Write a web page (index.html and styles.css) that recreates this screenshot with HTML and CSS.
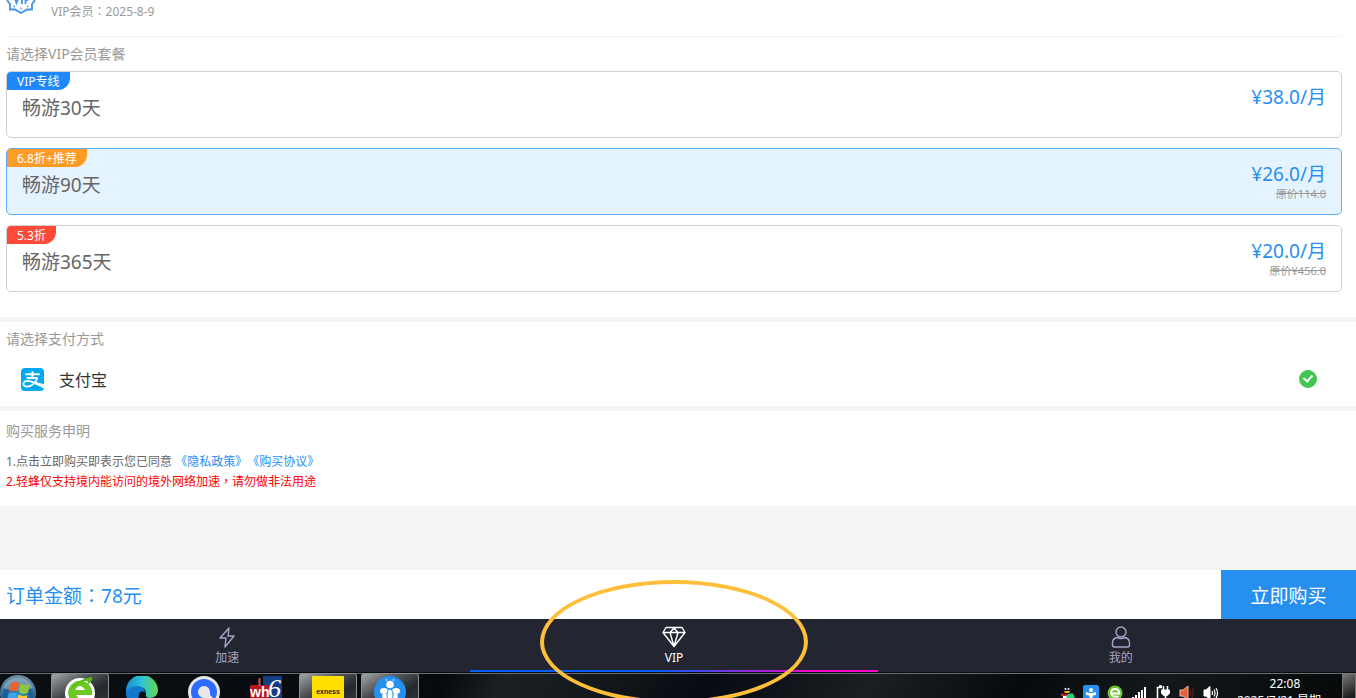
FILE: index.html
```html
<!DOCTYPE html>
<html lang="zh-CN">
<head>
    <meta charset="UTF-8">
    <meta name="viewport" content="width=device-width, initial-scale=1.0">
    <title>VIP</title>
    <link rel="stylesheet" href="styles.css">
</head>
<body>

<main class="page">
    <section class="panel plans-panel">
        <!-- Account -->
        <div class="account">
            <svg class="account-badge" width="30" height="15" viewBox="0 0 30 15" fill="none" stroke="#3d94ea" stroke-width="1.800">
                <path d="M3 -4L1.500 1L4 4L4 9.500L9 9.500L15 13L21 9.500L26 9.500L26 4L28.500 1L27 -4"/>
                <path d="M8 -4L10.500 3L13.500 -5M16 -4V4M19.500 4V0H21Q24 -1 22.500 -5" stroke-width="1.800"/>
                <path d="M7.500 6.500H9M14.500 8.500H16M21 6.500H22.500" stroke-width="1.300"/>
            </svg>
            <span>VIP会员<span class="mark" lang="zh-Hant">：</span>2025-8-9</span>
        </div>

        <!-- Plans -->
        <h2 class="panel-title">请选择VIP会员套餐</h2>
        <div class="plan-list">
            <label class="plan">
                <input type="radio" name="plan" value="30">
                <span class="plan-info">
                    <span class="plan-tag tag-blue">VIP专线</span>
                    <span class="plan-name">畅游30天</span>
                </span>
                <span class="plan-cost">
                    <span class="plan-price">¥38.0/月</span>
                </span>
            </label>
            <label class="plan">
                <input type="radio" name="plan" value="90" checked>
                <span class="plan-info">
                    <span class="plan-tag tag-orange">6.8折+推荐</span>
                    <span class="plan-name">畅游90天</span>
                </span>
                <span class="plan-cost">
                    <span class="plan-price">¥26.0/月</span>
                    <del class="plan-old">原价114.0</del>
                </span>
            </label>
            <label class="plan">
                <input type="radio" name="plan" value="365">
                <span class="plan-info">
                    <span class="plan-tag tag-red">5.3折</span>
                    <span class="plan-name">畅游365天</span>
                </span>
                <span class="plan-cost">
                    <span class="plan-price">¥20.0/月</span>
                    <del class="plan-old">原价¥456.0</del>
                </span>
            </label>
        </div>
    </section>

    <!-- Payment -->
    <section class="panel pay-panel">
        <h2 class="panel-title">请选择支付方式</h2>
        <label class="pay-option">
            <svg width="23" height="23" viewBox="0 0 24 24" fill="none" stroke="#fff">
                <rect width="24" height="24" rx="4" fill="#02a9f1" stroke="none"/>
                <path d="M4.500 6.500H19.500M12 3.500V10.500M6 10.500H17.500" stroke-width="2"/>
                <path d="M17 10.500C15.500 15 11.500 19.500 6.500 19.500C3.500 19.500 2 17.800 2.600 15.800C3.500 13 8 13 11 14.200L24 19" stroke-width="1.800"/>
                <path d="M13.500 14L24 17V21.500L12.500 16Z" fill="#fff" stroke="none"/>
            </svg>
            <span class="pay-name">支付宝</span>
            <input type="radio" name="pay" class="pay-check" checked>
        </label>
    </section>

    <!-- Terms -->
    <section class="panel terms-panel">
        <h2 class="panel-title">购买服务申明</h2>
        <p class="terms">1.点击立即购买即表示您已同意 <a href="#">《隐私政策》</a><a href="#">《购买协议》</a></p>
        <p class="terms warning">2.轻蜂仅支持境内能访问的境外网络加速<span class="mark" lang="zh-Hant">，</span>请勿做非法用途</p>
    </section>
</main>

<div class="order-bar">
    <span class="order-total">订单金额<span class="mark" lang="zh-Hant">：</span>78元</span>
    <button type="button" class="buy-now">立即购买</button>
</div>

<nav class="tabs">
    <a href="#" class="tab">
        <svg width="24" height="24" viewBox="0 0 24 24" fill="none" stroke="currentColor" stroke-width="1.400" stroke-linejoin="round">
            <path d="M14 3L5 13H11L10 22L19 11H13Z"/>
        </svg>
        <span>加速</span>
    </a>
    <a href="#" class="tab active">
        <svg width="24" height="24" viewBox="0 0 24 24" fill="none" stroke="currentColor" stroke-width="1.400" stroke-linejoin="round">
            <path d="M4 2.500H20L23 7.500L12 21.500L1 7.500ZM1 7.500H23M8 7.500L12 3L16 7.500L12 21.500Z"/>
        </svg>
        <span>VIP</span>
        <span class="circle-mark"></span>
    </a>
    <a href="#" class="tab">
        <svg width="24" height="24" viewBox="0 0 24 24" fill="none" stroke="currentColor" stroke-width="1.400">
            <circle cx="12" cy="7" r="5"/>
            <path d="M8 12.500Q3.500 13.500 3.500 18V20Q3.500 22 5.500 22H18.500Q20.500 22 20.500 20V18Q20.500 13.500 16 12.500Q12 14.500 8 12.500Z"/>
        </svg>
        <span>我的</span>
    </a>
</nav>

<!-- Desktop taskbar -->
<footer class="taskbar">
    <button type="button" class="start" aria-label="Start">
        <svg width="36" height="36" viewBox="0 0 36 36">
            <defs>
                <radialGradient id="orb" cx="50%" cy="70%" r="65%">
                    <stop offset="0" stop-color="#35b5e8"/>
                    <stop offset="0.600" stop-color="#17598f"/>
                    <stop offset="1" stop-color="#6b8aa0"/>
                </radialGradient>
            </defs>
            <circle cx="18" cy="18" r="18" fill="url(#orb)"/>
            <path d="M3 13A16 16 0 0 1 33 13Q18 18 3 13Z" fill="#b9cfde" opacity="0.450"/>
            <path d="M11 8Q15 5.500 19 8L17.500 17Q13 14.500 9 17Z" fill="#e9632b"/>
            <path d="M20.500 8.500Q25 11 30 9L28 18Q23 20 19 17.500Z" fill="#8cc63f"/>
            <path d="M8.500 18.500Q13 16 17 18.500L15.500 27Q11 25 7 27Z" fill="#3ea0e8"/>
            <path d="M18.500 19.500Q23 22 27.500 20L26 28Q21 30 17 27.500Z" fill="#fcc832"/>
        </svg>
    </button>
    <div class="apps">
        <button type="button" class="app open" aria-label="Browser">
            <svg width="32" height="32" viewBox="0 0 32 32">
                <circle cx="16" cy="17" r="15" fill="#fff"/>
                <path d="M5 21A12 12 0 1 1 28 19H12Q16 26 27 23Q22 31 13 29Q6 27 5 21Z" fill="#6cc924"/>
                <path d="M11 14Q16 6 21 14Z" fill="#fff"/>
                <path d="M3 20Q8 5 27 1Q31 2 24 9Q26 3 17 6Q8 10 3 20Z" fill="#57b81c"/>
            </svg>
        </button>
        <button type="button" class="app" aria-label="Edge">
            <svg width="32" height="32" viewBox="0 0 32 32">
                <defs>
                    <linearGradient id="edge">
                        <stop offset="0" stop-color="#1690d8"/>
                        <stop offset="0.500" stop-color="#2fc3d2"/>
                        <stop offset="1" stop-color="#62d84e"/>
                    </linearGradient>
                </defs>
                <path d="M0 16A16 16 0 0 1 32 14Q32 21 24 22Q19 22 20 18Q20 11 13 11Q5 11 0 20Z" fill="url(#edge)"/>
                <path d="M0 16Q5 9 12 10Q19 11 19 17Q17 14 14 16Q11 20 14 27L19 32Q0 33 0 16Z" fill="#1378cf"/>
            </svg>
        </button>
        <button type="button" class="app" aria-label="Messenger">
            <svg width="32" height="32" viewBox="0 0 32 32">
                <circle cx="16" cy="16" r="16" fill="#e9e9ec"/>
                <circle cx="16" cy="16" r="13" fill="#2f6bff"/>
                <path d="M16 22A6 6 0 1 1 22 16V19L25 22H16Z" fill="#e9e9ec"/>
            </svg>
        </button>
        <button type="button" class="app" aria-label="wh6">
            <svg width="32" height="32" viewBox="0 0 32 32">
                <path fill="#08090c" d="M0 0H13V10H0Z"/>
                <path fill="#143e83" d="M13 0H32V32H13Z"/>
                <path fill="#b9151f" d="M0 9H19V32H0Z"/>
                <path stroke="#c55" stroke-width="2" d="M9.500 2V10"/>
                <text class="icon-wh" x="0" y="21">wh</text>
                <text class="icon-six" x="18" y="21">6</text>
            </svg>
        </button>
        <button type="button" class="app open" aria-label="exness">
            <svg width="32" height="32" viewBox="0 0 32 32">
                <rect width="32" height="32" fill="#ffde02"/>
                <text class="icon-exness" x="16" y="18">exness</text>
            </svg>
        </button>
        <button type="button" class="app open" aria-label="轻蜂">
            <svg width="32" height="32" viewBox="0 0 32 32">
                <circle cx="16" cy="16" r="16" fill="#268ff0"/>
                <g fill="#fff">
                    <circle cx="16" cy="8.500" r="3.800"/>
                    <ellipse cx="10" cy="15" rx="4" ry="3"/>
                    <ellipse cx="22" cy="15" rx="4" ry="3"/>
                    <ellipse cx="11" cy="20" rx="3" ry="2.500"/>
                    <ellipse cx="21" cy="20" rx="3" ry="2.500"/>
                    <circle cx="12.500" cy="4" r="0.800"/>
                    <circle cx="19.500" cy="4" r="0.800"/>
                </g>
                <ellipse cx="16" cy="19" rx="3" ry="6" fill="#fff" stroke="#268ff0"/>
            </svg>
        </button>
    </div>

    <div class="tray">
        <svg width="16" height="16" viewBox="0 0 16 16">
            <ellipse cx="8" cy="6" rx="5" ry="6" fill="#111"/>
            <circle cx="6.500" cy="4" r="1" fill="#fff"/>
            <circle cx="9.500" cy="4" r="1" fill="#fff"/>
            <path d="M5 6H11L10 8H6Z" fill="#f6b21a"/>
            <path d="M2 8Q8 11 14 8V11Q8 13 2 11Z" fill="#e6202b"/>
            <path d="M4 11H12V16H4Z" fill="#fff"/>
            <circle cx="11.500" cy="12.500" r="4" fill="#22d07a"/>
        </svg>
        <svg width="16" height="16" viewBox="0 0 16 16">
            <rect width="16" height="16" rx="2" fill="#268ff0"/>
            <circle cx="8" cy="5" r="2" fill="#fff"/>
            <path d="M3 7L7 8H9L13 7V10L10 10.500Q10 13 8 13Q6 13 6 10.500L3 10Z" fill="#fff"/>
        </svg>
        <svg width="16" height="16" viewBox="0 0 16 16">
            <circle cx="8" cy="8" r="7.500" fill="#6ac52c"/>
            <path d="M3.500 8.500H12.500Q12 4 8 4Q4 4 4 8.500Q5 12.500 11.500 11.500" fill="none" stroke="#fff" stroke-width="1.800"/>
        </svg>
        <svg width="16" height="16" viewBox="0 0 16 16" fill="#fff">
            <path d="M1 12H3V16H1ZM4 10H6V16H4ZM7 7H9V16H7ZM10 5H12V16H10ZM13 2H15V16H13Z"/>
        </svg>
        <svg width="16" height="16" viewBox="0 0 16 16" fill="none" stroke="#fff">
            <path d="M7 2.500H2.500V16H8.500M4 1H7" stroke-width="1.500"/>
            <path d="M8.500 1V5M12.500 1V5" stroke-width="1.500"/>
            <path d="M6.500 5H14.500V8Q13 11 10.500 11Q8 11 6.500 8Z" fill="#fff"/>
            <path d="M10.500 10V16" stroke-width="1.500"/>
        </svg>
        <svg width="16" height="16" viewBox="0 0 16 16" fill="none">
            <path d="M1 5H4L9 1V15L4 11H1Z" fill="#e4603c" stroke="#f4b09c"/>
            <path d="M11 5Q13 8 11 11M13 3Q16 8 13 13" stroke="#662519"/>
        </svg>
        <svg width="16" height="16" viewBox="0 0 16 16" fill="none" stroke="#fff">
            <path d="M1 5H3L7 1.500V14.500L3 11H1Z" fill="#fff"/>
            <path d="M9 6Q10 8 9 10M11 4.500Q13 8 11 11.500M13 3Q16 8 13 13" stroke-width="1.200"/>
        </svg>
    </div>
    <div class="clock">
        <span>22:08</span>
        <span>2025/7/21 星期一</span>
    </div>
    <button type="button" class="show-desktop" aria-label="Show desktop"></button>
</footer>

</body>
</html>
```
FILE: styles.css
```css
* {
    box-sizing: border-box;
}
body {
    display: flex;
    flex-direction: column;
    height: 100vh;
    margin: 0;
    overflow: hidden;
    background-color: #f4f4f4;
    color: #666;
    font-family: "Noto Sans", "Noto Sans CJK SC", sans-serif;
    font-size: 12px;
    text-spacing-trim: space-all;
}
h2, p {
    margin: 0;
    font-weight: normal;
}
a {
    color: #268ff0;
    text-decoration: none;
}
svg {
    display: block;
    flex: none;
}
button {
    border: none;
    padding: 0;
    font-family: inherit;
    cursor: pointer;
}
/* centred full-width punctuation */
.mark {
    font-family: "Noto Sans CJK TC", sans-serif;
    line-height: 1;
}
.page {
    display: flex;
    flex: 1;
    flex-direction: column;
    gap: 5px;
    min-height: 0;
    overflow: hidden;
}
.panel {
    flex: none;
    padding: 0 14px 0 6px;
    background-color: #fff;
}
.panel-title {
    color: #999;
    font-size: 14px;
    line-height: 34px;
}

/* Account */
.account {
    display: flex;
    gap: 15px;
    height: 37px;
    border-bottom: 1px solid #f4f4f4;
    color: #999;
    line-height: 24px;
}

/* Plans */
.plans-panel {
    padding-bottom: 25px;
}
.plan-list {
    display: flex;
    flex-direction: column;
    gap: 10px;
}
.plan {
    position: relative;
    display: flex;
    justify-content: space-between;
    border: 1px solid #d0d0d0;
    border-radius: 5px;
    overflow: hidden;
    cursor: pointer;
}
.plan:has(input:checked) {
    border-color: #5caffa;
    background-color: #e5f3ff;
}
.plan input {
    position: absolute;
    inset: 0;
    width: 100%;
    height: 100%;
    margin: 0;
    opacity: 0;
    cursor: pointer;
}
.plan-info {
    display: flex;
    flex-direction: column;
    align-items: flex-start;
    padding-bottom: 11px;
}
.plan-tag {
    padding: 1px 10px 0;
    border-bottom-right-radius: 12px;
    color: #fff;
    line-height: 17px;
}
.tag-blue {
    background-color: #1e88fb;
}
.tag-orange {
    background-color: #ff9c27;
}
.tag-red {
    background-color: #ff4a39;
}
.plan-name {
    padding-left: 15px;
    font-size: 19px;
    line-height: 36px;
}
.plan-cost {
    display: flex;
    flex-direction: column;
    align-items: flex-end;
    padding: 11px 15px 0 0;
}
.plan-price {
    color: #268ff0;
    font-size: 19px;
    line-height: 28px;
}
.plan-old {
    color: #999;
    font-size: 11px;
    line-height: 12px;
}

/* Payment */
.pay-panel {
    padding-bottom: 4px;
}
.pay-option {
    display: flex;
    align-items: center;
    height: 46px;
    padding: 0 25px 0 15px;
    color: #333;
    cursor: pointer;
}
.pay-name {
    flex: 1;
    padding-left: 15px;
    font-size: 16px;
}
.pay-check {
    position: relative;
    width: 18px;
    height: 18px;
    margin: 0;
    border: 1px solid #ccc;
    border-radius: 50%;
    appearance: none;
}
.pay-check:checked {
    border-color: #44c553;
    background-color: #44c553;
}
.pay-check:checked::after {
    content: "";
    position: absolute;
    top: 2px;
    left: 5px;
    width: 4px;
    height: 7px;
    border: solid #fff;
    border-width: 0 2px 2px 0;
    transform: rotate(42deg);
}

/* Terms */
.terms-panel {
    padding-top: 3px;
    padding-bottom: 14px;
}
.terms-panel .panel-title {
    margin-bottom: 4px;
}
.terms {
    line-height: 20px;
}
.warning {
    color: #f00;
}

/* Order bar */
.order-bar {
    display: flex;
    flex: none;
    align-items: center;
    justify-content: space-between;
    height: 49px;
    background-color: #fff;
    font-size: 19px;
}
.order-total {
    padding-left: 6px;
    color: #268ff0;
}
.buy-now {
    align-self: stretch;
    width: 135px;
    background-color: #268ff0;
    color: #fff;
    font-size: 19px;
}

/* Bottom tabs */
.tabs {
    display: flex;
    flex: none;
    height: 53px;
    padding: 0 12px 0 4px;
    background-color: #232631;
}
.tab {
    position: relative;
    display: flex;
    flex: 1;
    flex-direction: column;
    align-items: center;
    padding-top: 6px;
    color: #a5a5c9;
    line-height: 18px;
}
.tab.active {
    color: #fff;
}
.tab.active::after {
    content: "";
    position: absolute;
    right: 19px;
    bottom: 0;
    left: 19px;
    height: 2px;
    background: linear-gradient(90deg, #0060ff 45%, #f0c 85%);
}
.circle-mark {
    position: absolute;
    z-index: 2;
    top: -39px;
    left: 50%;
    width: 268px;
    height: 124px;
    border: 4px solid #ffbf3b;
    border-radius: 50%;
    transform: translateX(-50%);
    pointer-events: none;
}

/* Taskbar */
.taskbar {
    display: flex;
    flex: none;
    align-items: flex-start;
    height: 26px;
    border-top: 1px solid #0a0b0e;
    overflow: hidden;
    background: linear-gradient(115deg, #0a0f14 0%, #070b10 33%, #1b2024 37%, #12171b 45%, #070b12 52%, #1b1f23 64%, #070a0d 75%, #14181a 85%, #060809 100%);
    box-shadow: inset 0 1px #6b6f74;
    color: #fff;
}
.start {
    margin-top: 2px;
    background: none;
}
.apps {
    display: flex;
    flex: 1;
    gap: 4px;
    padding-left: 15px;
}
.app {
    display: flex;
    justify-content: center;
    width: 58px;
    height: 40px;
    padding-top: 3px;
    background: none;
}
.app.open {
    border: 1px solid #8c8f92;
    border-radius: 3px;
    padding-top: 2px;
    background: linear-gradient(150deg, #a3a5a7 0%, #4d5053 35%, #25292c 60%, #3a3d40 100%);
}
.icon-wh {
    fill: #fff;
    font-family: "Liberation Sans", sans-serif;
    font-size: 14px;
    font-weight: bold;
}
.icon-six {
    fill: #fff;
    font-family: "Liberation Serif", serif;
    font-size: 26px;
    font-style: italic;
}
.icon-exness {
    fill: #222;
    font-family: "Liberation Sans", sans-serif;
    font-size: 7px;
    font-weight: bold;
    text-anchor: middle;
}
.tray {
    display: flex;
    gap: 8px;
    padding: 12px 18px 0 0;
}
.clock {
    display: flex;
    flex-direction: column;
    align-items: center;
    padding: 2px 9px 0 0;
    line-height: 17px;
}
.show-desktop {
    width: 14px;
    height: 40px;
    border: 1px solid #777;
    background: linear-gradient(150deg, #777 0%, #1c1f21 60%);
}
```
